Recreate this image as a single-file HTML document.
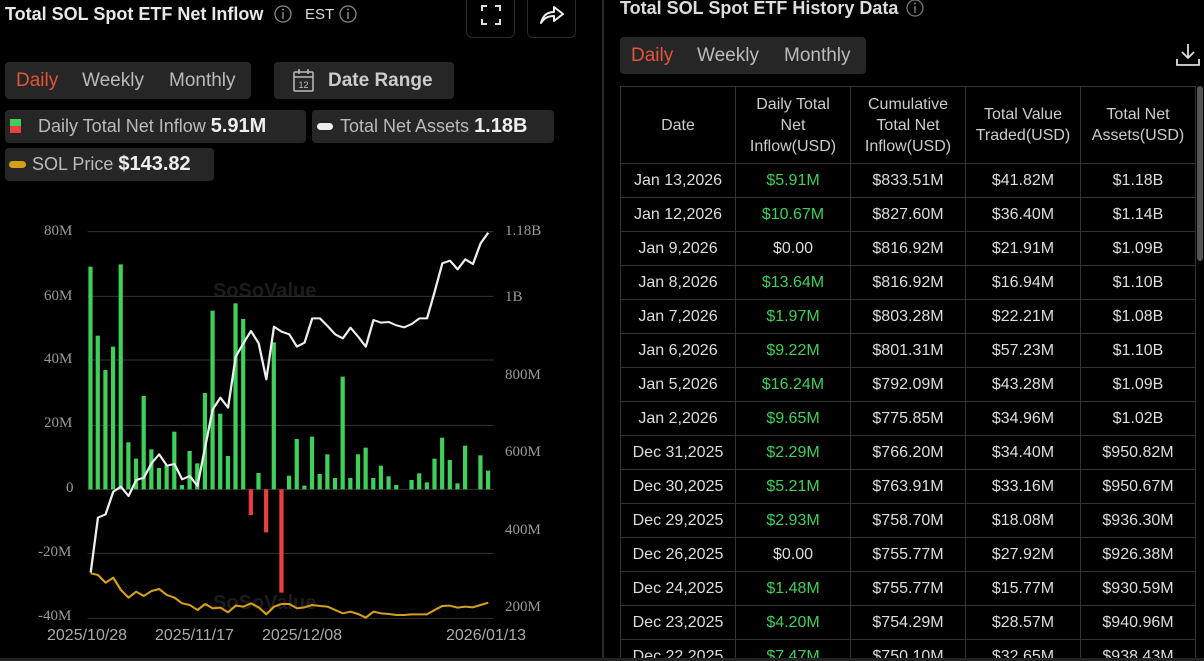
<!DOCTYPE html>
<html><head><meta charset="utf-8"><style>
*{margin:0;padding:0;box-sizing:border-box}
html{width:1204px;height:661px;overflow:hidden;background:#000}
body{width:1204px;height:661px;background:#000;color:#ddd;font-family:"Liberation Sans",sans-serif;position:relative;overflow:hidden}
.a{position:absolute;white-space:nowrap}
.box{position:absolute;background:#262626;border-radius:4px}
.tab{font-size:19px;color:#bbb}
.or{color:#e2553a}
.tw{position:absolute;left:620px;top:86px;width:578px;height:575px;overflow:hidden}
table{border-collapse:collapse;font-size:16px;color:#ddd}
td,th{border:1px solid #333;text-align:center;font-weight:normal;width:115px;height:34px;padding:0}
th{height:77px;line-height:21px;color:#ccc;font-size:16px}
td.g{color:#3fcf5a}
.ax{font-family:"Liberation Serif",serif;font-size:15px;color:#999}
.dx{font-size:16px;color:#aaa}
</style></head><body>
<div class="a" style="left:5px;top:4px;font-size:18px;font-weight:bold;color:#e8e8e8">Total SOL Spot ETF Net Inflow</div>
<svg class="a" style="left:274px;top:5px" width="20" height="20"><circle cx="9" cy="9" r="8" fill="none" stroke="#888" stroke-width="1.3"/><line x1="9" y1="7" x2="9" y2="14" stroke="#888" stroke-width="1.5"/><circle cx="9" cy="4.5" r="1" fill="#888"/></svg>
<div class="a" style="left:305px;top:6px;font-size:15px;color:#ddd">EST</div>
<svg class="a" style="left:339px;top:5px" width="20" height="20"><circle cx="9" cy="9" r="8" fill="none" stroke="#888" stroke-width="1.3"/><line x1="9" y1="7" x2="9" y2="14" stroke="#888" stroke-width="1.5"/><circle cx="9" cy="4.5" r="1" fill="#888"/></svg>
<div class="a" style="left:466px;top:-10px;width:49px;height:48px;border:1px solid #2a2a2a;border-radius:6px"></div>
<svg class="a" style="left:481px;top:5px" width="20" height="20" fill="none" stroke="#ddd" stroke-width="2"><path d="M1 6V1h5M14 1h5v5M19 14v5h-5M6 19H1v-5"/></svg>
<div class="a" style="left:527px;top:-10px;width:49px;height:48px;border:1px solid #2a2a2a;border-radius:6px"></div>
<svg class="a" style="left:539px;top:4px" width="26" height="22"><path d="M2 19C4 11 9 8 15 8V3l9 7-9 7v-5C9 12 5 14 2 19z" fill="none" stroke="#eee" stroke-width="2" stroke-linejoin="round"/></svg>

<div class="box" style="left:5px;top:62px;width:246px;height:37px"></div>
<div class="a tab or" style="left:16px;top:70px">Daily</div>
<div class="a tab" style="left:82px;top:70px">Weekly</div>
<div class="a tab" style="left:169px;top:70px">Monthly</div>
<div class="box" style="left:274px;top:62px;width:180px;height:37px"></div>
<svg class="a" style="left:293px;top:69px" width="22" height="24" fill="none" stroke="#bbb" stroke-width="1.5"><rect x="1" y="3" width="19" height="19" rx="1"/><line x1="1" y1="8" x2="20" y2="8"/><line x1="6" y1="0" x2="6" y2="5"/><line x1="15" y1="0" x2="15" y2="5"/><text x="10.5" y="19" font-size="9" fill="#bbb" stroke="none" text-anchor="middle" font-family="Liberation Sans">12</text></svg>
<div class="a" style="left:328px;top:70px;font-size:19px;font-weight:bold;color:#ccc">Date Range</div>

<div class="box" style="left:5px;top:110px;width:301px;height:33px"></div>
<div class="a" style="left:10px;top:119px;width:11px;height:7px;background:#3fcf5a"></div>
<div class="a" style="left:10px;top:126px;width:11px;height:7px;background:#e84040"></div>
<div class="a" style="left:38px;top:115px;font-size:18px;color:#bbb">Daily Total Net Inflow <b style="color:#eee;font-size:20px">5.91M</b></div>
<div class="box" style="left:312px;top:110px;width:242px;height:33px"></div>
<div class="a" style="left:317px;top:123px;width:16px;height:7px;border-radius:4px;background:#eee"></div>
<div class="a" style="left:340px;top:115px;font-size:18px;color:#bbb">Total Net Assets <b style="color:#eee;font-size:20px">1.18B</b></div>
<div class="box" style="left:5px;top:148px;width:209px;height:33px"></div>
<div class="a" style="left:9px;top:161px;width:17px;height:7px;border-radius:4px;background:#d4a017"></div>
<div class="a" style="left:32px;top:153px;font-size:18px;color:#bbb">SOL Price <b style="color:#eee;font-size:20px">$143.82</b></div>

<div class="a" style="left:213px;top:280px;font-size:20px;font-weight:bold;color:#1c1c1c">SoSoValue</div>
<div class="a" style="left:213px;top:592px;font-size:20px;font-weight:bold;color:#1c1c1c">SoSoValue</div>
<svg class="a" style="left:0;top:220px" width="600" height="441" viewBox="0 0 1568 1323" preserveAspectRatio="none">
<g stroke="#333" stroke-width="3">
<line x1="229" y1="35" x2="1290" y2="35"/><line x1="229" y1="229" x2="1290" y2="229"/><line x1="229" y1="420" x2="1290" y2="420"/><line x1="229" y1="616" x2="1290" y2="616"/><line x1="229" y1="808" x2="1290" y2="808"/><line x1="229" y1="1000" x2="1290" y2="1000"/><line x1="229" y1="1195" x2="1290" y2="1195"/>
</g>
<g fill="#3fcf5a">
<rect x="231" y="140" width="11" height="668"/><rect x="250" y="347" width="11" height="461"/><rect x="270" y="450" width="11" height="358"/><rect x="290" y="380" width="11" height="428"/><rect x="310" y="133" width="11" height="675"/><rect x="330" y="667" width="11" height="141"/><rect x="350" y="716" width="11" height="92"/><rect x="370" y="528" width="11" height="280"/><rect x="390" y="688" width="11" height="120"/><rect x="410" y="744" width="11" height="64"/><rect x="430" y="735" width="11" height="73"/><rect x="450" y="635" width="11" height="173"/><rect x="470" y="795" width="11" height="13"/><rect x="490" y="693" width="11" height="115"/><rect x="510" y="730" width="11" height="78"/><rect x="530" y="519" width="11" height="289"/><rect x="550" y="272" width="11" height="536"/><rect x="570" y="581" width="11" height="227"/><rect x="590" y="708" width="11" height="100"/><rect x="610" y="250" width="11" height="558"/><rect x="630" y="297" width="11" height="511"/><rect x="670" y="759" width="11" height="49"/><rect x="710" y="367" width="11" height="441"/><rect x="750" y="767" width="11" height="41"/><rect x="770" y="657" width="11" height="151"/><rect x="790" y="797" width="11" height="11"/><rect x="810" y="650" width="11" height="158"/><rect x="830" y="762" width="11" height="46"/><rect x="850" y="703" width="11" height="105"/><rect x="870" y="774" width="11" height="34"/><rect x="890" y="470" width="11" height="338"/><rect x="910" y="774" width="11" height="34"/><rect x="930" y="703" width="11" height="105"/><rect x="950" y="683" width="11" height="125"/><rect x="970" y="774" width="11" height="34"/><rect x="990" y="737" width="11" height="71"/><rect x="1010" y="769" width="11" height="39"/><rect x="1030" y="795" width="11" height="13"/><rect x="1070" y="780" width="11" height="28"/><rect x="1090" y="760" width="11" height="48"/><rect x="1110" y="787" width="11" height="21"/><rect x="1130" y="716" width="11" height="92"/><rect x="1150" y="653" width="11" height="155"/><rect x="1170" y="720" width="11" height="88"/><rect x="1190" y="790" width="11" height="18"/><rect x="1210" y="677" width="11" height="131"/><rect x="1250" y="706" width="11" height="102"/><rect x="1270" y="752" width="11" height="56"/>
</g>
<g fill="#e84040"><rect x="650" y="808" width="11" height="77"/><rect x="690" y="808" width="11" height="129"/><rect x="730" y="808" width="11" height="310"/></g>
<polyline fill="none" stroke="#eee" stroke-width="6" stroke-linejoin="round" points="237,1058 256,893 276,883 296,815 316,800 336,828 356,780 376,773 396,730 416,703 436,737 456,732 476,778 496,768 516,798 536,682 556,568 576,533 596,563 616,410 636,370 656,333 676,370 696,478 716,320 736,335 756,343 776,380 796,368 816,295 836,295 856,318 876,343 896,355 916,323 936,350 956,380 976,300 996,308 1016,306 1036,316 1056,322 1076,312 1096,295 1116,295 1136,215 1156,130 1176,122 1196,148 1216,118 1236,132 1256,70 1276,38"/>
<polyline fill="none" stroke="#d4a017" stroke-width="6" stroke-linejoin="round" points="237,1060 256,1065 276,1088 296,1073 316,1110 336,1133 356,1115 376,1128 396,1113 416,1107 436,1125 456,1133 476,1150 496,1155 516,1170 536,1152 556,1165 576,1163 596,1177 616,1157 636,1160 656,1150 676,1162 696,1183 716,1160 736,1152 756,1152 776,1165 796,1162 816,1155 836,1158 856,1160 876,1170 896,1180 916,1175 936,1182 956,1193 976,1175 996,1180 1016,1182 1036,1185 1056,1185 1076,1183 1096,1183 1116,1183 1136,1170 1156,1158 1176,1157 1196,1163 1216,1160 1236,1162 1256,1155 1276,1148"/>
</svg>
<div class="a ax" style="left:44px;top:223px">80M</div>
<div class="a ax" style="left:44px;top:288px">60M</div>
<div class="a ax" style="left:44px;top:351px">40M</div>
<div class="a ax" style="left:44px;top:415px">20M</div>
<div class="a ax" style="left:66px;top:480px">0</div>
<div class="a ax" style="left:38px;top:544px">-20M</div>
<div class="a ax" style="left:38px;top:608px">-40M</div>
<div class="a ax" style="left:505px;top:223px">1.18B</div>
<div class="a ax" style="left:505px;top:289px">1B</div>
<div class="a ax" style="left:505px;top:367px">800M</div>
<div class="a ax" style="left:505px;top:444px">600M</div>
<div class="a ax" style="left:505px;top:522px">400M</div>
<div class="a ax" style="left:505px;top:599px">200M</div>
<div class="a dx" style="left:47px;top:627px">2025/10/28</div>
<div class="a dx" style="left:155px;top:627px">2025/11/17</div>
<div class="a dx" style="left:262px;top:627px">2025/12/08</div>
<div class="a dx" style="left:446px;top:627px">2026/01/13</div>

<div class="a" style="left:602px;top:0;width:2px;height:661px;background:#2a2a2a"></div>

<div class="a" style="left:620px;top:-2px;font-size:18px;font-weight:bold;color:#ddd">Total SOL Spot ETF History Data</div>
<svg class="a" style="left:906px;top:-1px" width="20" height="20"><circle cx="9" cy="9" r="8" fill="none" stroke="#777" stroke-width="1.3"/><line x1="9" y1="7" x2="9" y2="14" stroke="#777" stroke-width="1.5"/><circle cx="9" cy="4.5" r="1" fill="#777"/></svg>
<div class="box" style="left:620px;top:37px;width:246px;height:37px"></div>
<div class="a tab or" style="left:631px;top:45px">Daily</div>
<div class="a tab" style="left:697px;top:45px">Weekly</div>
<div class="a tab" style="left:784px;top:45px">Monthly</div>
<svg class="a" style="left:1176px;top:43px" width="24" height="24" fill="none" stroke="#ddd" stroke-width="1.8"><path d="M12 1v14M6 9l6 6 6-6M1 16v6h22v-6"/></svg>

<div class="tw"><table>
<tr><th>Date</th><th>Daily Total<br>Net<br>Inflow(USD)</th><th>Cumulative<br>Total Net<br>Inflow(USD)</th><th>Total Value<br>Traded(USD)</th><th>Total Net<br>Assets(USD)</th></tr>
<tr><td>Jan 13,2026</td><td class="g">$5.91M</td><td>$833.51M</td><td>$41.82M</td><td>$1.18B</td></tr>
<tr><td>Jan 12,2026</td><td class="g">$10.67M</td><td>$827.60M</td><td>$36.40M</td><td>$1.14B</td></tr>
<tr><td>Jan 9,2026</td><td>$0.00</td><td>$816.92M</td><td>$21.91M</td><td>$1.09B</td></tr>
<tr><td>Jan 8,2026</td><td class="g">$13.64M</td><td>$816.92M</td><td>$16.94M</td><td>$1.10B</td></tr>
<tr><td>Jan 7,2026</td><td class="g">$1.97M</td><td>$803.28M</td><td>$22.21M</td><td>$1.08B</td></tr>
<tr><td>Jan 6,2026</td><td class="g">$9.22M</td><td>$801.31M</td><td>$57.23M</td><td>$1.10B</td></tr>
<tr><td>Jan 5,2026</td><td class="g">$16.24M</td><td>$792.09M</td><td>$43.28M</td><td>$1.09B</td></tr>
<tr><td>Jan 2,2026</td><td class="g">$9.65M</td><td>$775.85M</td><td>$34.96M</td><td>$1.02B</td></tr>
<tr><td>Dec 31,2025</td><td class="g">$2.29M</td><td>$766.20M</td><td>$34.40M</td><td>$950.82M</td></tr>
<tr><td>Dec 30,2025</td><td class="g">$5.21M</td><td>$763.91M</td><td>$33.16M</td><td>$950.67M</td></tr>
<tr><td>Dec 29,2025</td><td class="g">$2.93M</td><td>$758.70M</td><td>$18.08M</td><td>$936.30M</td></tr>
<tr><td>Dec 26,2025</td><td>$0.00</td><td>$755.77M</td><td>$27.92M</td><td>$926.38M</td></tr>
<tr><td>Dec 24,2025</td><td class="g">$1.48M</td><td>$755.77M</td><td>$15.77M</td><td>$930.59M</td></tr>
<tr><td>Dec 23,2025</td><td class="g">$4.20M</td><td>$754.29M</td><td>$28.57M</td><td>$940.96M</td></tr>
<tr><td>Dec 22,2025</td><td class="g">$7.47M</td><td>$750.10M</td><td>$32.65M</td><td>$938.43M</td></tr>
</table></div>
<div class="a" style="left:1197px;top:86px;width:6px;height:175px;background:#555;border-radius:3px"></div>
<div class="a" style="left:0;top:658px;width:1204px;height:3px;background:#222"></div>
</body></html>
